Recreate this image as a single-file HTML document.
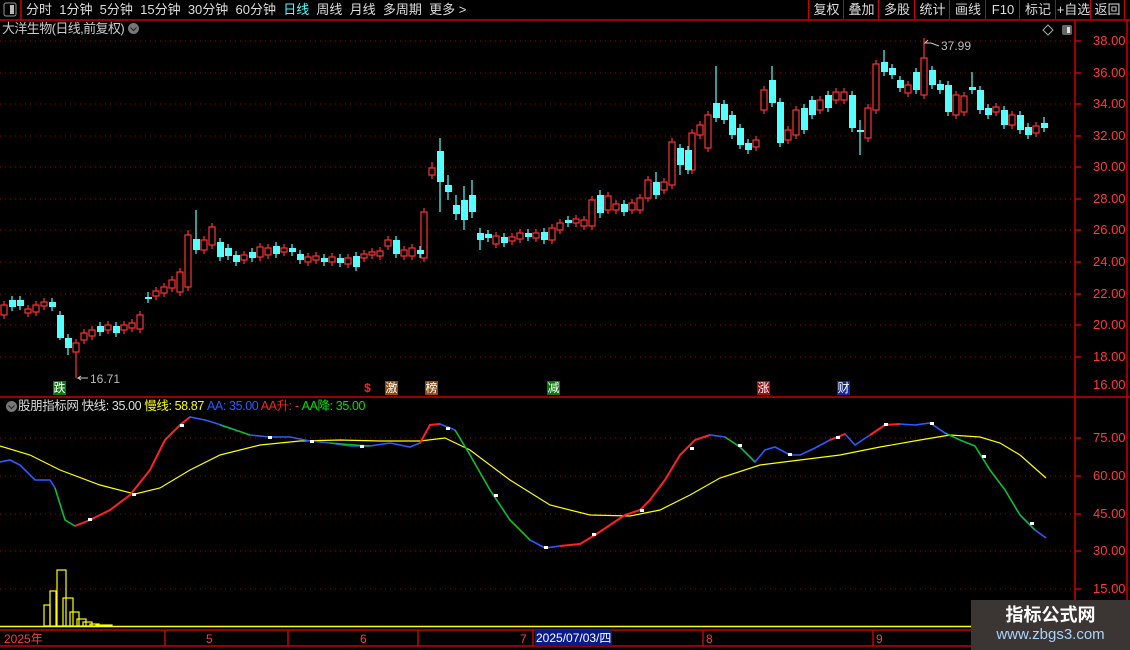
<!DOCTYPE html>
<html><head><meta charset="utf-8"><style>
*{margin:0;padding:0}
body{width:1130px;height:650px;background:#000;overflow:hidden;position:relative;font-family:"Liberation Sans","Noto Sans CJK SC",sans-serif;color:#ccc}
.t{position:absolute;white-space:nowrap;font-size:13px;line-height:16px}
.btn{position:absolute;top:0;height:19px;border-left:1px solid #c00;color:#ddd;font-size:13px;line-height:19px;text-align:center}
.ax{position:absolute;color:#ff3b3b;font-size:13px;line-height:14px;left:1093px}
.mk{position:absolute;top:381px;font-size:12px;line-height:14px;width:13px;text-align:center;color:#fff}
</style></head><body>
<svg width="1130" height="650" style="position:absolute;left:0;top:0">
<g stroke="#c00" stroke-width="1.5" fill="none">
<line x1="0" y1="20" x2="1130" y2="20"/>
<line x1="0" y1="397" x2="1130" y2="397"/>
<line x1="0" y1="630" x2="1130" y2="630"/>
<line x1="0" y1="646" x2="1130" y2="646"/>
<line x1="1075" y1="20" x2="1075" y2="646"/>
<line x1="1127" y1="20" x2="1127" y2="646"/>
<line x1="21" y1="0" x2="21" y2="20"/>
<line x1="165" y1="630" x2="165" y2="646"/><line x1="288" y1="630" x2="288" y2="646"/><line x1="418" y1="630" x2="418" y2="646"/><line x1="533" y1="630" x2="533" y2="646"/><line x1="703" y1="630" x2="703" y2="646"/><line x1="873" y1="630" x2="873" y2="646"/>
</g>
<g stroke="#a00" stroke-dasharray="1,4" stroke-width="1">
<line x1="0" y1="41" x2="1075" y2="41"/><line x1="0" y1="73" x2="1075" y2="73"/><line x1="0" y1="104" x2="1075" y2="104"/><line x1="0" y1="136" x2="1075" y2="136"/><line x1="0" y1="167" x2="1075" y2="167"/><line x1="0" y1="199" x2="1075" y2="199"/><line x1="0" y1="230" x2="1075" y2="230"/><line x1="0" y1="262" x2="1075" y2="262"/><line x1="0" y1="294" x2="1075" y2="294"/><line x1="0" y1="325" x2="1075" y2="325"/><line x1="0" y1="357" x2="1075" y2="357"/>
<line x1="0" y1="438" x2="1075" y2="438"/><line x1="0" y1="476" x2="1075" y2="476"/><line x1="0" y1="514" x2="1075" y2="514"/><line x1="0" y1="551" x2="1075" y2="551"/><line x1="0" y1="589" x2="1075" y2="589"/>
</g>
<g stroke="#c00" stroke-width="1.5">
<line x1="1075" y1="41" x2="1081" y2="41"/><line x1="1075" y1="73" x2="1081" y2="73"/><line x1="1075" y1="104" x2="1081" y2="104"/><line x1="1075" y1="136" x2="1081" y2="136"/><line x1="1075" y1="167" x2="1081" y2="167"/><line x1="1075" y1="199" x2="1081" y2="199"/><line x1="1075" y1="230" x2="1081" y2="230"/><line x1="1075" y1="262" x2="1081" y2="262"/><line x1="1075" y1="294" x2="1081" y2="294"/><line x1="1075" y1="325" x2="1081" y2="325"/><line x1="1075" y1="357" x2="1081" y2="357"/>
<line x1="1075" y1="438" x2="1081" y2="438"/><line x1="1075" y1="476" x2="1081" y2="476"/><line x1="1075" y1="514" x2="1081" y2="514"/><line x1="1075" y1="551" x2="1081" y2="551"/><line x1="1075" y1="589" x2="1081" y2="589"/>
</g>
<g stroke="#ff3232" fill="none" stroke-width="1.2">
<path d="M4 301V319M28 305V317M36 301V316M44 298V310M76 339V378M84 329V344M92 326V340M108 321V334M124 321V334M132 319V332M140 311V333M156 287V300M164 283V297M172 276V292M180 268V296M188 230V291M204 236V254M212 223V249M244 251V264M260 243V261M268 244V259M284 244V256M308 253V266M316 252V264M332 253V266M348 254V268M364 250V262M372 248V259M380 247V260M388 236V250M404 246V260M412 244V260M424 208V262M432 162V179M496 232V248M512 233V245M520 229V243M536 229V242M552 224V244M560 219V234M576 215V227M584 216V230M592 196V230M608 192V214M616 200V214M632 199V214M640 194V214M648 176V202M664 178V194M672 138V189M692 129V174M700 121V139M708 111V152M756 136V151M764 86V114M788 126V144M796 106V139M820 96V114M836 88V104M844 88V104M868 104V142M876 60V114M908 81V97M924 38V99M956 91V119M964 92V116M996 103V116M1012 111V129M1036 122V137"/>
</g>
<g fill="#000" stroke="#ff3232" stroke-width="1.2">
<rect x="1" y="305" width="6" height="10"/><rect x="25" y="309" width="6" height="4"/><rect x="33" y="305" width="6" height="7"/><rect x="41" y="302" width="6" height="4"/><rect x="73" y="343" width="6" height="9"/><rect x="81" y="333" width="6" height="7"/><rect x="89" y="330" width="6" height="6"/><rect x="105" y="325" width="6" height="5"/><rect x="121" y="325" width="6" height="5"/><rect x="129" y="323" width="6" height="5"/><rect x="137" y="315" width="6" height="14"/><rect x="153" y="291" width="6" height="5"/><rect x="161" y="287" width="6" height="6"/><rect x="169" y="280" width="6" height="8"/><rect x="177" y="272" width="6" height="20"/><rect x="185" y="235" width="6" height="52"/><rect x="201" y="240" width="6" height="10"/><rect x="209" y="227" width="6" height="18"/><rect x="241" y="255" width="6" height="5"/><rect x="257" y="247" width="6" height="10"/><rect x="265" y="248" width="6" height="7"/><rect x="281" y="248" width="6" height="4"/><rect x="305" y="257" width="6" height="5"/><rect x="313" y="256" width="6" height="4"/><rect x="329" y="257" width="6" height="5"/><rect x="345" y="258" width="6" height="6"/><rect x="361" y="254" width="6" height="4"/><rect x="369" y="252" width="6" height="3"/><rect x="377" y="251" width="6" height="5"/><rect x="385" y="240" width="6" height="6"/><rect x="401" y="250" width="6" height="6"/><rect x="409" y="248" width="6" height="8"/><rect x="421" y="212" width="6" height="46"/><rect x="429" y="168" width="6" height="7"/><rect x="493" y="236" width="6" height="8"/><rect x="509" y="237" width="6" height="4"/><rect x="517" y="233" width="6" height="6"/><rect x="533" y="233" width="6" height="5"/><rect x="549" y="228" width="6" height="12"/><rect x="557" y="223" width="6" height="7"/><rect x="573" y="219" width="6" height="4"/><rect x="581" y="220" width="6" height="6"/><rect x="589" y="200" width="6" height="26"/><rect x="605" y="196" width="6" height="14"/><rect x="613" y="204" width="6" height="6"/><rect x="629" y="203" width="6" height="7"/><rect x="637" y="198" width="6" height="12"/><rect x="645" y="180" width="6" height="18"/><rect x="661" y="182" width="6" height="8"/><rect x="669" y="142" width="6" height="43"/><rect x="689" y="133" width="6" height="37"/><rect x="697" y="125" width="6" height="10"/><rect x="705" y="115" width="6" height="33"/><rect x="753" y="140" width="6" height="7"/><rect x="761" y="90" width="6" height="20"/><rect x="785" y="130" width="6" height="10"/><rect x="793" y="110" width="6" height="25"/><rect x="817" y="100" width="6" height="10"/><rect x="833" y="92" width="6" height="8"/><rect x="841" y="92" width="6" height="8"/><rect x="865" y="108" width="6" height="30"/><rect x="873" y="64" width="6" height="46"/><rect x="905" y="85" width="6" height="8"/><rect x="921" y="58" width="6" height="37"/><rect x="953" y="95" width="6" height="20"/><rect x="961" y="96" width="6" height="16"/><rect x="993" y="107" width="6" height="5"/><rect x="1009" y="115" width="6" height="10"/><rect x="1033" y="126" width="6" height="7"/>
</g>
<g stroke="#54ffff" stroke-width="1.2">
<path d="M12 296V311M20 296V310M52 298V311M60 311V340M68 334V355M100 322V336M116 322V337M148 292V303M196 210V254M220 238V261M228 244V260M236 251V266M252 248V262M276 242V258M292 244V256M300 250V264M324 254V266M340 254V267M356 252V271M396 236V258M420 246V258M440 138V212M448 175V200M456 195V220M464 186V230M472 180V218M480 228V250M488 230V242M504 233V247M528 229V241M544 228V244M568 216V227M600 190V218M624 200V216M656 172V199M680 144V175M688 146V174M716 66V122M724 100V124M732 111V139M740 124V149M748 139V154M772 66V107M780 98V147M804 104V134M812 96V119M828 91V112M852 91V132M860 120V155M884 50V76M892 64V79M900 76V92M916 68V94M932 66V89M940 80V94M948 81V116M972 72V94M980 86V114M988 104V119M1004 106V129M1020 111V134M1028 123V139M1044 117V132"/>
</g>
<g fill="#54ffff">
<rect x="9" y="300" width="7" height="7"/><rect x="17" y="300" width="7" height="6"/><rect x="49" y="302" width="7" height="5"/><rect x="57" y="315" width="7" height="23"/><rect x="65" y="338" width="7" height="10"/><rect x="97" y="326" width="7" height="6"/><rect x="113" y="326" width="7" height="7"/><rect x="145" y="297" width="7" height="2"/><rect x="193" y="239" width="7" height="11"/><rect x="217" y="242" width="7" height="15"/><rect x="225" y="248" width="7" height="8"/><rect x="233" y="255" width="7" height="7"/><rect x="249" y="252" width="7" height="6"/><rect x="273" y="246" width="7" height="8"/><rect x="289" y="248" width="7" height="4"/><rect x="297" y="254" width="7" height="6"/><rect x="321" y="258" width="7" height="4"/><rect x="337" y="258" width="7" height="5"/><rect x="353" y="256" width="7" height="11"/><rect x="393" y="240" width="7" height="14"/><rect x="417" y="250" width="7" height="4"/><rect x="437" y="151" width="7" height="31"/><rect x="445" y="185" width="7" height="7"/><rect x="453" y="205" width="7" height="9"/><rect x="461" y="200" width="7" height="20"/><rect x="469" y="195" width="7" height="17"/><rect x="477" y="233" width="7" height="7"/><rect x="485" y="234" width="7" height="4"/><rect x="501" y="237" width="7" height="6"/><rect x="525" y="233" width="7" height="4"/><rect x="541" y="232" width="7" height="8"/><rect x="565" y="220" width="7" height="3"/><rect x="597" y="195" width="7" height="18"/><rect x="621" y="204" width="7" height="8"/><rect x="653" y="182" width="7" height="13"/><rect x="677" y="148" width="7" height="17"/><rect x="685" y="150" width="7" height="20"/><rect x="713" y="103" width="7" height="15"/><rect x="721" y="104" width="7" height="16"/><rect x="729" y="115" width="7" height="20"/><rect x="737" y="128" width="7" height="17"/><rect x="745" y="143" width="7" height="7"/><rect x="769" y="80" width="7" height="23"/><rect x="777" y="102" width="7" height="41"/><rect x="801" y="108" width="7" height="22"/><rect x="809" y="100" width="7" height="15"/><rect x="825" y="95" width="7" height="13"/><rect x="849" y="95" width="7" height="33"/><rect x="857" y="130" width="7" height="2"/><rect x="881" y="62" width="7" height="10"/><rect x="889" y="68" width="7" height="7"/><rect x="897" y="80" width="7" height="8"/><rect x="913" y="72" width="7" height="18"/><rect x="929" y="70" width="7" height="15"/><rect x="937" y="84" width="7" height="6"/><rect x="945" y="85" width="7" height="27"/><rect x="969" y="87" width="7" height="3"/><rect x="977" y="90" width="7" height="20"/><rect x="985" y="108" width="7" height="7"/><rect x="1001" y="110" width="7" height="15"/><rect x="1017" y="115" width="7" height="15"/><rect x="1025" y="127" width="7" height="8"/><rect x="1041" y="123" width="7" height="5"/>
</g>
<g stroke="#ccc" fill="none" stroke-width="1"><path d="M88 378H78l3-2M78 378l3 2"/><path d="M928 40l-3 3h6l8 3"/></g>
<path d="M1048 25l5 5-5 5-5-5z" stroke="#aaa" fill="none"/>
<rect x="1062" y="25" width="10" height="10" rx="2" fill="#666"/><rect x="1067" y="27" width="3" height="6" fill="#ddd"/>
<polyline fill="none" stroke="#ffff00" stroke-width="1.2" points="0,446 30,455 60,470 100,485 135,494 160,488 190,470 220,455 260,445 300,441 340,440 380,441 420,441 445,438 470,450 510,480 550,505 590,515 630,516 660,510 690,495 720,478 760,465 800,460 840,455 880,447 920,440 950,435 980,437 1000,443 1020,455 1046,478"/>
<polyline fill="none" stroke="#2a5cff" stroke-width="1.6" points="0,462 10,460 20,465 35,480 50,480 55,488 65,520 75,526 90,520 110,510 130,495 150,470 165,440 180,425 190,417 205,420 215,423 230,428 250,435 270,437 290,437 310,441 330,443 350,446 370,446 390,443 410,447 420,443 430,425 440,424 455,430 470,455 490,490 510,520 530,540 545,548 560,546 580,544 595,535 610,525 625,515 640,510 650,500 665,480 680,455 695,440 710,435 725,437 740,447 755,462 765,450 775,447 790,455 800,455 815,448 830,440 845,434 855,445 870,435 885,425 900,424 915,425 930,423 945,433 960,440 975,446 990,470 1005,490 1020,515 1035,530 1046,538"/>
<g fill="none" stroke="#00d000" stroke-width="1.3"><polyline points="55,488 65,520 75,526"/><polyline points="455,430 470,455 490,490 510,520 530,540"/><polyline points="725,437 740,447 755,462"/><polyline points="945,433 960,440 975,446 990,470 1005,490 1020,515 1035,530"/><polyline points="220,425 250,435"/><polyline points="330,443 370,446"/></g>
<g fill="none" stroke="#ff2020" stroke-width="2"><polyline points="75,526 90,520 110,510 130,495 150,470 165,440 180,425 190,417"/><polyline points="420,443 430,425 440,424"/><polyline points="560,546 580,544 595,535 610,525 625,515 640,510 650,500 665,480 680,455 695,440 710,435"/><polyline points="830,440 845,434"/><polyline points="870,435 885,425 900,424"/></g>
<g fill="#fff"><rect x="88" y="518" width="4" height="3"/><rect x="132" y="493" width="4" height="3"/><rect x="180" y="424" width="4" height="3"/><rect x="268" y="436" width="4" height="3"/><rect x="310" y="440" width="4" height="3"/><rect x="360" y="445" width="4" height="3"/><rect x="446" y="427" width="4" height="3"/><rect x="494" y="494" width="4" height="3"/><rect x="544" y="546" width="4" height="3"/><rect x="592" y="533" width="4" height="3"/><rect x="640" y="509" width="4" height="3"/><rect x="690" y="447" width="4" height="3"/><rect x="738" y="444" width="4" height="3"/><rect x="788" y="453" width="4" height="3"/><rect x="836" y="436" width="4" height="3"/><rect x="884" y="423" width="4" height="3"/><rect x="930" y="422" width="4" height="3"/><rect x="982" y="455" width="4" height="3"/><rect x="1030" y="522" width="4" height="3"/></g>
<g fill="none" stroke="#ffff00" stroke-width="1.2"><rect x="44" y="605" width="6" height="21"/><rect x="50" y="591" width="6" height="35"/><rect x="57" y="570" width="9" height="56"/><rect x="63" y="598" width="10" height="28"/><rect x="70" y="612" width="9" height="14"/><rect x="77" y="619" width="9" height="7"/><rect x="83" y="622" width="9" height="4"/><rect x="90" y="624" width="9" height="2"/><rect x="96" y="625" width="16" height="1"/></g>
<line x1="0" y1="626.5" x2="1075" y2="626.5" stroke="#ffff00" stroke-width="1.5"/>
<rect x="6" y="401" width="11" height="11" rx="5.5" fill="#777"/><path d="M8.5 405.5l3 3 3-3" stroke="#222" fill="none"/>
<rect x="128" y="23" width="11" height="11" rx="5.5" fill="#777"/><path d="M130.5 27.5l3 3 3-3" stroke="#222" fill="none"/>
<rect x="4" y="3" width="12" height="13" rx="2" fill="none" stroke="#999"/><rect x="10" y="5" width="4" height="9" fill="#bbb"/>
</svg>
<div class="t" style="left:26px;top:2px;color:#ddd">分时&nbsp; 1分钟&nbsp; 5分钟&nbsp; 15分钟&nbsp; 30分钟&nbsp; 60分钟&nbsp; <span style="color:#54ffff">日线</span>&nbsp; 周线&nbsp; 月线&nbsp; 多周期&nbsp; 更多 &gt;</div>
<div class="btn" style="left:808px;width:35px">复权</div><div class="btn" style="left:843px;width:35px">叠加</div><div class="btn" style="left:878px;width:36px">多股</div><div class="btn" style="left:914px;width:35px">统计</div><div class="btn" style="left:949px;width:36px">画线</div><div class="btn" style="left:985px;width:34px">F10</div><div class="btn" style="left:1019px;width:36px">标记</div><div class="btn" style="left:1055px;width:35px">+自选</div><div class="btn" style="left:1090px;width:33px;border-right:1px solid #c00">返回</div>
<div class="t" style="left:2px;top:21px;color:#ccc;letter-spacing:-0.6px">大洋生物(日线,前复权)</div>
<div class="t" style="left:90px;top:371px;font-size:12px;color:#bbb">16.71</div>
<div class="t" style="left:941px;top:38px;font-size:12px;color:#bbb">37.99</div>
<div class="mk" style="left:53px;background:#0a7a0a">跌</div>
<div class="mk" style="left:361px;color:#ff2020;font-weight:bold">$</div>
<div class="mk" style="left:385px;background:#8a4a10">激</div>
<div class="mk" style="left:425px;background:#8a4a10">榜</div>
<div class="mk" style="left:547px;background:#0a7a0a">减</div>
<div class="mk" style="left:757px;background:#9a1010">涨</div>
<div class="mk" style="left:837px;background:#102a9a">财</div>
<div class="t" style="left:18px;top:398px;color:#ddd;font-size:12.5px;letter-spacing:-0.4px">股朋指标网 快线: 35.00 <span style="color:#ffff00">慢线: 58.87</span> <span style="color:#2a5cff">AA: 35.00</span> <span style="color:#ff2020">AA升: -</span> <span style="color:#00e000">AA降: 35.00</span></div>
<div class="ax" style="top:34px">38.00</div><div class="ax" style="top:66px">36.00</div><div class="ax" style="top:97px">34.00</div><div class="ax" style="top:129px">32.00</div><div class="ax" style="top:160px">30.00</div><div class="ax" style="top:192px">28.00</div><div class="ax" style="top:223px">26.00</div><div class="ax" style="top:255px">24.00</div><div class="ax" style="top:287px">22.00</div><div class="ax" style="top:318px">20.00</div><div class="ax" style="top:350px">18.00</div><div class="ax" style="top:378px">16.00</div>
<div class="ax" style="top:431px">75.00</div><div class="ax" style="top:469px">60.00</div><div class="ax" style="top:507px">45.00</div><div class="ax" style="top:544px">30.00</div><div class="ax" style="top:582px">15.00</div>
<div class="t" style="left:4px;top:631px;color:#ff3b3b;font-size:12px">2025年</div>
<div class="t" style="left:206px;top:631px;color:#ff3b3b;font-size:12px">5</div>
<div class="t" style="left:360px;top:631px;color:#ff3b3b;font-size:12px">6</div>
<div class="t" style="left:520px;top:631px;color:#ff3b3b;font-size:12px">7</div>
<div class="t" style="left:535px;top:630px;color:#fff;background:#0a1a8a;font-size:12px;padding:0 1px">2025/07/03/四</div>
<div class="t" style="left:706px;top:631px;color:#ff3b3b;font-size:12px">8</div>
<div class="t" style="left:876px;top:631px;color:#ff3b3b;font-size:12px">9</div>
<div style="position:absolute;left:971px;top:600px;width:159px;height:50px;background:#3b3534">
<div style="position:absolute;left:0;width:159px;top:4px;text-align:center;color:#fff;font-weight:bold;font-size:18px;line-height:22px">指标公式网</div>
<div style="position:absolute;left:0;width:159px;top:26px;text-align:center;color:#a8d4ff;font-size:15px;line-height:18px">www.zbgs3.com</div>
</div>
</body></html>
